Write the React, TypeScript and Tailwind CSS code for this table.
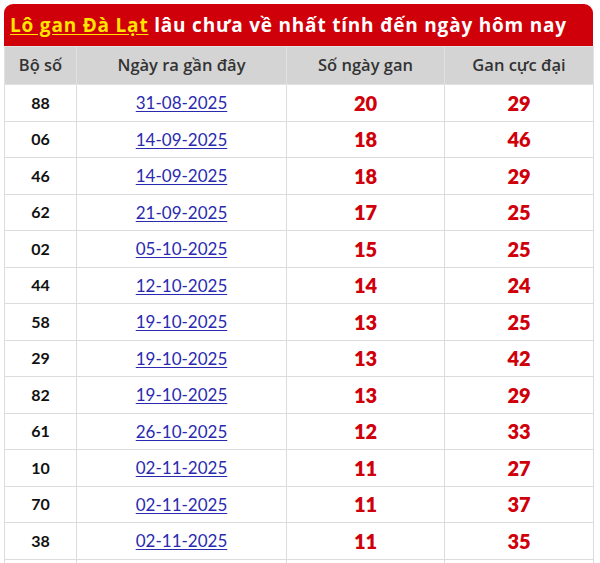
const ROWS: [string, string, number, number][] = [
  ["88", "31-08-2025", 20, 29],
  ["06", "14-09-2025", 18, 46],
  ["46", "14-09-2025", 18, 29],
  ["62", "21-09-2025", 17, 25],
  ["02", "05-10-2025", 15, 25],
  ["44", "12-10-2025", 14, 24],
  ["58", "19-10-2025", 13, 25],
  ["29", "19-10-2025", 13, 42],
  ["82", "19-10-2025", 13, 29],
  ["61", "26-10-2025", 12, 33],
  ["10", "02-11-2025", 11, 27],
  ["70", "02-11-2025", 11, 37],
  ["38", "02-11-2025", 11, 35],
];

export default function App() {
  return (
    <div className="h-[563px] w-[600px] overflow-hidden bg-white pl-1 pt-1 font-['Lato',sans-serif]">
      <div className="w-[589px]">
        <div className="flex h-[42px] items-center justify-center rounded-t-[9px] bg-[#d0000b] pr-5 font-['Open_Sans',sans-serif] text-[19px] font-bold tracking-[0.8px] text-white">
          <a href="#" className="text-[#ffe500] underline underline-offset-2">
            Lô gan Đà Lạt
          </a>
          <span>&nbsp;lâu chưa về nhất tính đến ngày hôm nay</span>
        </div>
        <table className="w-full table-fixed border-collapse">
          <colgroup>
            <col className="w-[72px]" />
            <col className="w-[210px]" />
            <col className="w-[158px]" />
            <col className="w-[149px]" />
          </colgroup>
          <thead>
            <tr className="h-[38px] bg-[#d4d4d4] font-['Open_Sans',sans-serif] text-[16.5px] text-[#333]">
              <th className="border border-[#e2e2e2] font-semibold">Bộ số</th>
              <th className="border border-[#e2e2e2] font-semibold">Ngày ra gần đây</th>
              <th className="border border-[#e2e2e2] font-semibold">Số ngày gan</th>
              <th className="border border-[#e2e2e2] font-semibold">Gan cực đại</th>
            </tr>
          </thead>
          <tbody>
            {ROWS.map(([so, date, gan, max]) => (
              <tr key={so} className="h-[36.5px] text-center">
                <td className="border border-[#dcdcdc] text-[16px] font-bold text-[#111]">{so}</td>
                <td className="border border-[#dcdcdc] text-[17px]">
                  <a href="#" className="text-[#2a2ab0] underline underline-offset-2">
                    {date}
                  </a>
                </td>
                <td className="border border-[#dcdcdc] text-[20px] font-extrabold text-[#d0000b]">{gan}</td>
                <td className="border border-[#dcdcdc] text-[20px] font-extrabold text-[#d0000b]">{max}</td>
              </tr>
            ))}
            <tr className="h-[36.5px]">
              <td className="border border-[#dcdcdc]" />
              <td className="border border-[#dcdcdc]" />
              <td className="border border-[#dcdcdc]" />
              <td className="border border-[#dcdcdc]" />
            </tr>
          </tbody>
        </table>
      </div>
    </div>
  );
}
